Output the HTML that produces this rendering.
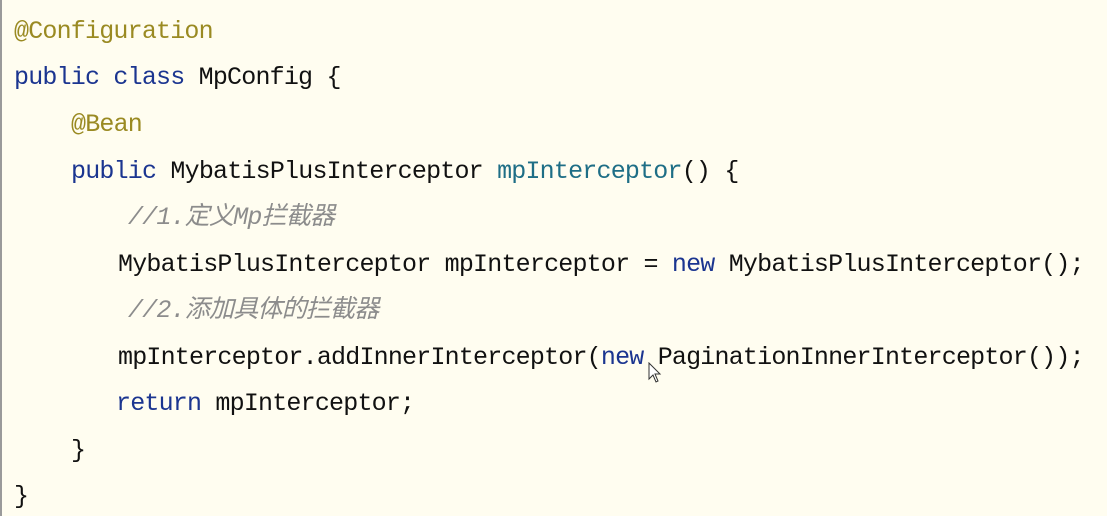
<!DOCTYPE html>
<html><head><meta charset="utf-8"><style>
html,body{margin:0;padding:0;}
body{width:1107px;height:516px;background:#fffdf0;position:relative;overflow:hidden;border-left:2px solid #9a9a9a;box-sizing:border-box;}
.l{position:absolute;white-space:pre;font-family:"Liberation Mono","Noto Sans CJK SC",monospace;font-size:25px;letter-spacing:-0.8px;line-height:30px;color:#111;}
.a{color:#9a8a22}
.k{color:#1b3590}
.m{color:#1e6e86}
.c{color:#8c8c8c;font-style:italic}
</style></head><body>
<div class="l a" style="left:12px;top:17px">@Configuration</div>
<div class="l" style="left:12px;top:63px"><span class="k">public class</span> MpConfig {</div>
<div class="l a" style="left:69px;top:110px">@Bean</div>
<div class="l" style="left:69px;top:157px"><span class="k">public</span> MybatisPlusInterceptor <span class="m">mpInterceptor</span>() {</div>
<div class="l c" style="left:126px;top:203px">//1.定义Mp拦截器</div>
<div class="l" style="left:116px;top:250px">MybatisPlusInterceptor mpInterceptor = <span class="k">new</span> MybatisPlusInterceptor();</div>
<div class="l c" style="left:126px;top:296px">//2.添加具体的拦截器</div>
<div class="l" style="left:116px;top:343px">mpInterceptor.addInnerInterceptor(<span class="k">new</span> PaginationInnerInterceptor());</div>
<div class="l" style="left:114px;top:389px"><span class="k">return</span> mpInterceptor;</div>
<div class="l" style="left:69px;top:436px">}</div>
<div class="l" style="left:12px;top:482px">}</div>
<svg style="position:absolute;left:646px;top:362px" width="14" height="22" viewBox="0 0 14 22"><path d="M1 1 L1 17 L5 13 L8 20 L10 19 L7 12 L12 12 Z" fill="#fff" stroke="#333" stroke-width="1"/></svg>
</body></html>
